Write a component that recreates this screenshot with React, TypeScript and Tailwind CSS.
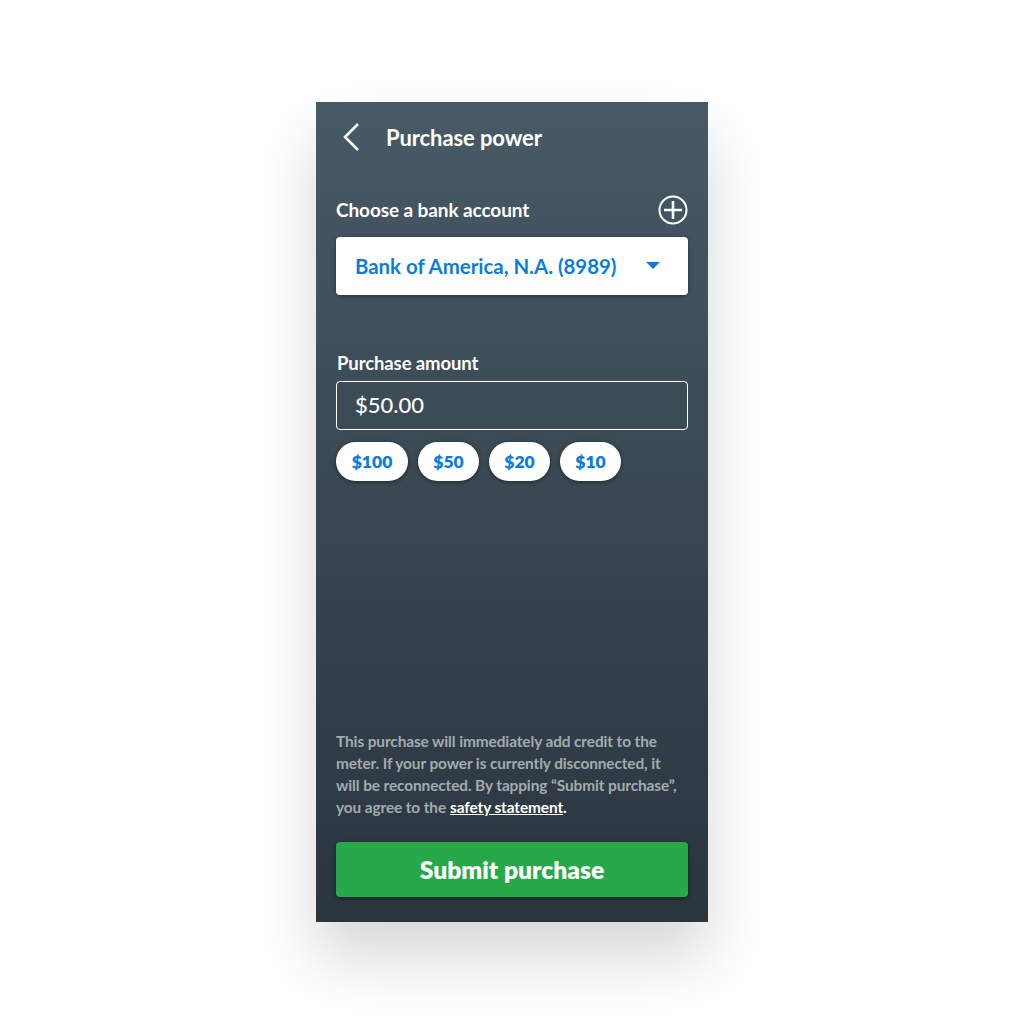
const amounts = ['$100', '$50', '$20', '$10'];

function AmountChip({ label }: { label: string }) {
  return (
    <button
      type="button"
      className="h-[39px] px-[15px] pt-[1px] min-w-[61px] first:w-[72px] rounded-full bg-white text-[#0a7ddc] text-[17.5px] font-extrabold shadow-[0_1px_4px_rgba(0,0,0,0.45)]"
    >
      {label}
    </button>
  );
}

export default function App() {
  return (
    <div className="min-h-[1024px] bg-white flex justify-center pt-[102px] font-['Lato',sans-serif]">
      <div className="w-[392px] h-[820px] flex flex-col bg-gradient-to-b from-[#475a66] to-[#2a353e] shadow-[0_36px_60px_rgba(0,0,0,0.16)] px-[20px] pb-[25px]">
        <div className="h-[70px] flex items-center -mx-[2px]">
          <svg width="24" height="32" viewBox="0 0 24 32" fill="none" className="ml-[7px] mr-[21px]">
            <path d="M17 3 L4 16 L17 29" stroke="white" strokeWidth="2.6" />
          </svg>
          <span className="text-white text-[22px] font-bold tracking-[-0.1px]">Purchase power</span>
        </div>

        <div className="mt-[21px] h-[34px] flex items-center justify-between">
          <span className="text-white text-[19px] font-bold tracking-[-0.1px]">Choose a bank account</span>
          <svg width="30" height="30" viewBox="0 0 30 30" fill="none">
            <circle cx="15" cy="15" r="13.5" stroke="white" strokeWidth="2" />
            <path d="M15 6 V24 M6 15 H24" stroke="white" strokeWidth="2.6" />
          </svg>
        </div>

        <div className="mt-[10px] h-[58px] rounded-[4px] bg-white shadow-[0_1px_4px_rgba(0,0,0,0.4)] flex items-center pl-[19px] pr-[28px] justify-between">
          <span className="text-[#0a7ddc] text-[20.4px] font-bold leading-[24px]">Bank of America, N.A. (8989)</span>
          <svg width="14" height="7" viewBox="0 0 14 7" className="-mt-[1px]">
            <path d="M0 0 H14 L7 7 Z" fill="#0a7ddc" />
          </svg>
        </div>

        <div className="mt-[56px] ml-[1px] text-white text-[18.5px] font-bold tracking-[-0.1px] leading-[24px]">Purchase amount</div>

        <div className="mt-[6px] h-[49px] rounded-[4px] border border-white flex items-center pl-[18px] pb-[3px] text-white text-[22px] font-medium">
          $50.00
        </div>

        <div className="mt-[12px] flex gap-[10px]">
          {amounts.map((a) => (
            <AmountChip key={a} label={a} />
          ))}
        </div>

        <div className="mt-auto text-[#a3abb0] text-[15.4px] font-bold leading-[22px] tracking-[-0.1px] whitespace-nowrap">
          <div>This purchase will immediately add credit to the</div>
          <div>meter. If your power is currently disconnected, it</div>
          <div>will be reconnected. By tapping “Submit purchase”,</div>
          <div className="flex">
            <span className="mr-[4px]">you agree to the</span>
            <a className="text-white underline">safety statement</a>
            <span className="text-white">.</span>
          </div>
        </div>

        <button
          type="button"
          className="mt-[24px] h-[55px] w-full rounded-[4px] bg-[#27a949] text-white text-[24.6px] font-extrabold pt-[1px] shadow-[0_1px_4px_rgba(0,0,0,0.45)]"
        >
          Submit purchase
        </button>
      </div>
    </div>
  );
}
